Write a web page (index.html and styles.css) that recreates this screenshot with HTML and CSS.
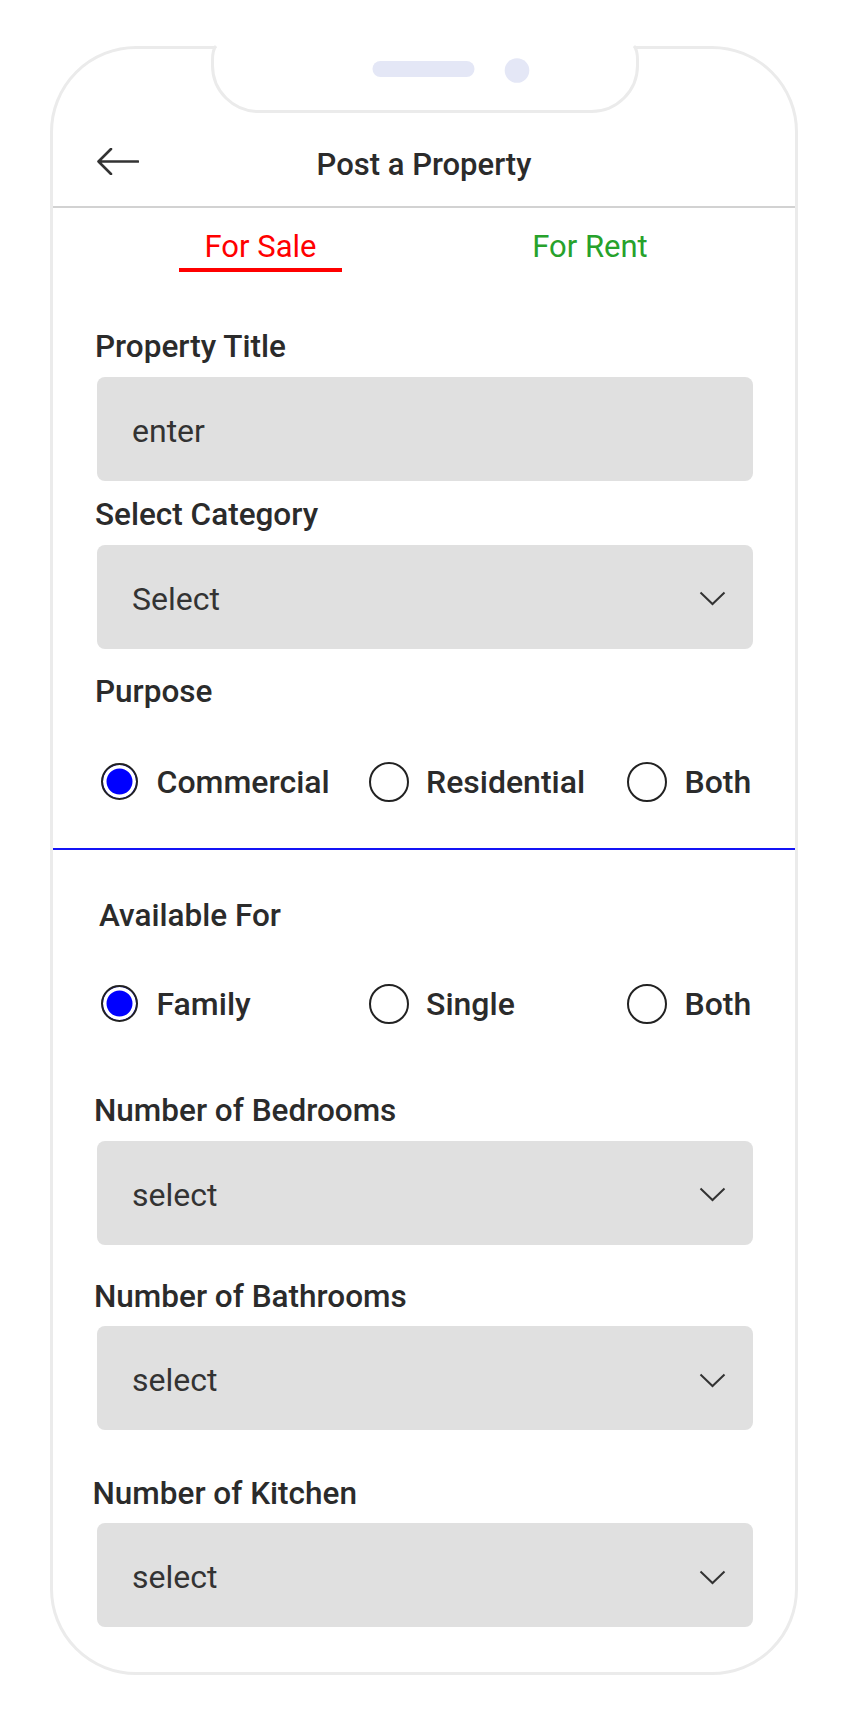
FILE: index.html
```html
<!DOCTYPE html>
<html lang="en">
<head>
<meta charset="utf-8">
<title>Post a Property</title>
<link rel="stylesheet" href="styles.css">
</head>
<body>
<div class="phone">
  <svg class="notch" width="430" height="70" viewBox="0 0 430 70">
    <path class="notch-fill" d="M6,0 Q2.5,4 2.5,14 L2.5,19.5 A46,46 0 0 0 48.5,65.5 L381.5,65.5 A46,46 0 0 0 427.5,19.5 L427.5,14 Q427.5,4 424,0 Z"/>
    <path class="notch-line" d="M6,0 Q2.5,4 2.5,14 L2.5,19.5 A46,46 0 0 0 48.5,65.5 L381.5,65.5 A46,46 0 0 0 427.5,19.5 L427.5,14 Q427.5,4 424,0"/>
    <rect class="notch-part" x="162.5" y="15" width="102" height="16" rx="8"/>
    <circle class="notch-part" cx="307" cy="24.5" r="12.3"/>
  </svg>

  <header class="topbar">
    <span class="back">
      <svg width="42" height="27" viewBox="0 0 42 27">
        <path d="M1.5,13.5 L41,13.5 M14,1 L1.5,13.5 L14,26" fill="none" stroke="#333" stroke-width="2.6" stroke-linecap="round" stroke-linejoin="round"/>
      </svg>
    </span>
    <h1 class="title">Post a Property</h1>
    <span></span>
  </header>

  <nav class="tabs">
    <div class="tab"><span class="tab-label tab-label--sale">For Sale</span></div>
    <div class="tab"><span class="tab-label tab-label--rent">For Rent</span></div>
  </nav>

  <section class="form">
    <div class="field-label fl-title">Property Title</div>
    <div class="box">enter</div>

    <div class="field-label fl-category">Select Category</div>
    <div class="box box--select">
      <span>Select</span>
      <svg class="chev" width="27" height="15" viewBox="0 0 27 15"><polyline points="1.5,1.5 13.5,13 25.5,1.5" fill="none" stroke="#333" stroke-width="2"/></svg>
    </div>

    <div class="field-label fl-purpose">Purpose</div>
    <div class="radios radios--purpose">
      <div class="radio-opt"><span class="radio radio--on"></span><span>Commercial</span></div>
      <div class="radio-opt"><span class="radio"></span><span>Residential</span></div>
      <div class="radio-opt"><span class="radio"></span><span>Both</span></div>
    </div>
  </section>

  <div class="divider"></div>

  <section class="form form--bottom">
    <div class="field-label fl-available">Available For</div>
    <div class="radios radios--available">
      <div class="radio-opt"><span class="radio radio--on"></span><span>Family</span></div>
      <div class="radio-opt"><span class="radio"></span><span>Single</span></div>
      <div class="radio-opt"><span class="radio"></span><span>Both</span></div>
    </div>

    <div class="field-label fl-bed">Number of Bedrooms</div>
    <div class="box box--select">
      <span>select</span>
      <svg class="chev" width="27" height="15" viewBox="0 0 27 15"><polyline points="1.5,1.5 13.5,13 25.5,1.5" fill="none" stroke="#333" stroke-width="2"/></svg>
    </div>

    <div class="field-label fl-bath">Number of Bathrooms</div>
    <div class="box box--select">
      <span>select</span>
      <svg class="chev" width="27" height="15" viewBox="0 0 27 15"><polyline points="1.5,1.5 13.5,13 25.5,1.5" fill="none" stroke="#333" stroke-width="2"/></svg>
    </div>

    <div class="field-label fl-kitchen">Number of Kitchen</div>
    <div class="box box--select">
      <span>select</span>
      <svg class="chev" width="27" height="15" viewBox="0 0 27 15"><polyline points="1.5,1.5 13.5,13 25.5,1.5" fill="none" stroke="#333" stroke-width="2"/></svg>
    </div>
  </section>
</div>
</body>
</html>
```

FILE: styles.css
```css
html, body {
  margin: 0;
  padding: 0;
  background: #ffffff;
}

body {
  font-family: Roboto, "Noto Sans", "Liberation Sans", sans-serif;
  color: #2b2b2b;
}

.phone {
  position: relative;
  box-sizing: border-box;
  width: 748px;
  margin: 46px 0 0 50px;
  border: 3px solid #ebebeb;
  border-radius: 86px;
  padding-bottom: 45px;
  background: #fff;
}

/* notch drawn over the frame's top edge */
.notch {
  position: absolute;
  top: -3px;
  left: 156.5px;
  display: block;
  overflow: visible;
}
.notch-fill {
  fill: #ffffff;
}
.notch-line {
  fill: none;
  stroke: #ebebeb;
  stroke-width: 3;
}
.notch-part {
  fill: #e4e7f6;
}

/* header */
.topbar {
  display: grid;
  grid-template-columns: 1fr auto 1fr;
  align-items: start;
  padding: 98px 0 23px;
  border-bottom: 2px solid #d2d2d2;
}
.back {
  padding-left: 44px;
  padding-top: 1px;
}
.back svg {
  display: block;
}
.title {
  margin: 0;
  font-size: 31px;
  font-weight: 500;
  line-height: 36px;
  color: #2b2b2b;
  white-space: nowrap;
}

/* tabs */
.tabs {
  display: grid;
  grid-template-columns: 335px 324px;
  padding: 21px 0 0 40px;
}
.tab {
  text-align: center;
}
.tab-label {
  display: inline-block;
  font-size: 31px;
  line-height: 36px;
  padding: 0 26px 3px;
  border-bottom: 4px solid transparent;
}
.tab-label--sale {
  color: #ff0000;
  border-bottom-color: #ff0000;
}
.tab-label--rent {
  color: #27a22b;
}

/* form */
.form {
  padding: 0 42px 0 44px;
}

.field-label {
  font-size: 31.5px;
  font-weight: 500;
  line-height: 36px;
  color: #2b2b2b;
  margin-left: -2px;
  padding-top: 1px;
  margin-bottom: 11.5px;
}
.fl-title { margin-top: 56px; }
.fl-category { margin-top: 15.5px; }
.fl-purpose { margin-top: 24.5px; margin-bottom: 0; }
.fl-available { margin-top: 46.7px; margin-left: 2px; margin-bottom: 0; }
.fl-bed { margin-top: 68.5px; margin-left: -3px; }
.fl-bath { margin-top: 33px; margin-left: -3px; }
.fl-kitchen { margin-top: 44.8px; margin-left: -4.5px; }

.box {
  box-sizing: border-box;
  height: 104px;
  display: flex;
  align-items: center;
  padding: 4px 27.5px 0 35px;
  background: #e0e0e0;
  border-radius: 8px;
  font-size: 32px;
  line-height: 36px;
  color: #333333;
}
.box--select {
  justify-content: space-between;
}
.chev {
  display: block;
  flex: none;
}

/* radios */
.radios {
  display: grid;
  grid-template-columns: 269.5px 258.5px auto;
  margin-left: 2px;
}
.radios--purpose { margin-top: 51.6px; }
.radios--available { margin-top: 50px; }

.radio-opt {
  display: flex;
  align-items: center;
  gap: 17.5px;
  height: 40px;
  font-size: 32px;
  font-weight: 500;
  line-height: 36px;
  color: #2b2b2b;
  white-space: nowrap;
}
.radio {
  flex: none;
  box-sizing: border-box;
  width: 40px;
  height: 40px;
  border: 2px solid #222;
  border-radius: 50%;
  background: #fff;
}
.radio--on {
  width: 37px;
  height: 37px;
  margin: 0 1.5px;
  background: #0000ff;
  box-shadow: inset 0 0 0 3.5px #fff;
}

.divider {
  height: 2px;
  margin-top: 46.3px;
  background: #1414f5;
}
```
